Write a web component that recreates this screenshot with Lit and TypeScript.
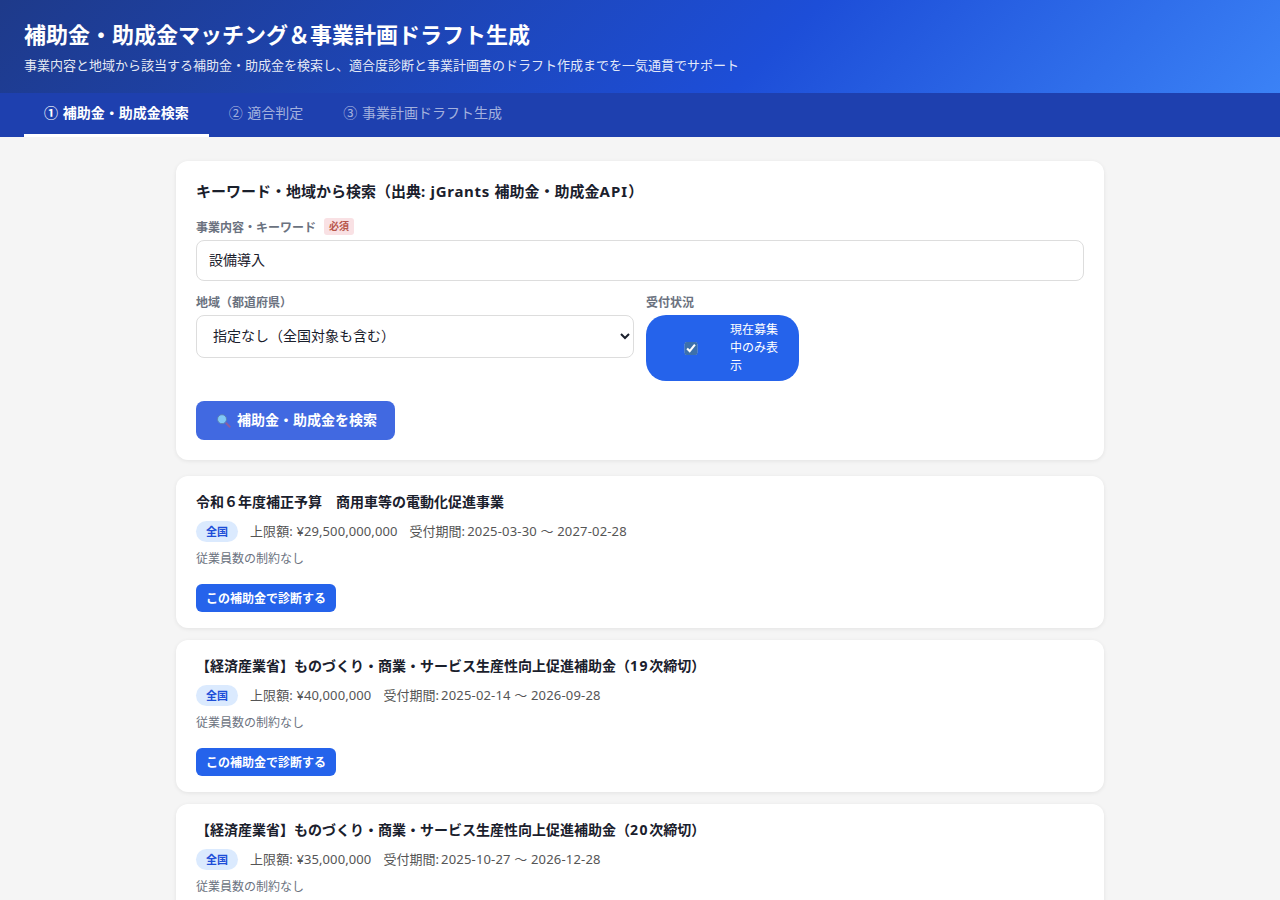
import { LitElement, html, css } from "lit";
import { customElement } from "lit/decorators.js";

const AMP = "\uFF06";
const LP = "\uFF08";
const RP = "\uFF09";
const items = [
  { title: "令和\uFF16年度補正予算\u3000商用車等の電動化促進事業", round: "", amount: "¥29,500,000,000", period: "2025-03-30 〜 2027-02-28" },
  { title: "【経済産業省】ものづくり・商業・サービス生産性向上促進補助金", round: "19", amount: "¥40,000,000", period: "2025-02-14 〜 2026-09-28" },
  { title: "【経済産業省】ものづくり・商業・サービス生産性向上促進補助金", round: "20", amount: "¥35,000,000", period: "2025-10-27 〜 2026-12-28" },
];

@customElement("app-root")
export class AppRoot extends LitElement {
  static styles = css`
    :host {
      display: block;
      min-height: 900px;
      background: #f5f5f5;
      color: #1a202c;
      font-family: "Noto Sans", "Noto Sans CJK JP", sans-serif;
    }
    * { box-sizing: border-box; }
    .header {
      height: 93px;
      padding: 19px 24px 0;
      color: #fff;
      background: linear-gradient(135deg, #1e3a8a 0%, #1d4ed8 60%, #3b82f6 100%);
    }
    h1 { margin: 0; font-size: 22px; line-height: 30px; font-weight: 700; }
    .sub { margin: 6px 0 0; font-size: 13px; line-height: 20px; color: rgba(255, 255, 255, 0.9); }
    .tabs { display: flex; height: 44px; padding: 0 24px; background: #1e40af; }
    .tab {
      padding: 0 20px;
      font-size: 14px;
      line-height: 39px;
      word-spacing: 1px;
      color: rgba(255, 255, 255, 0.6);
      border-bottom: 3px solid transparent;
    }
    .tab.on { color: #fff; font-weight: 700; border-bottom-color: #fff; }
    .main { width: 928px; margin: 0 auto; padding-top: 24px; display: flex; flex-direction: column; gap: 12px; }
    .card { background: #fff; border-radius: 12px; padding: 20px; box-shadow: 0 1px 4px rgba(0, 0, 0, 0.08); }
    .search { margin-bottom: 4px; }
    h2 { margin: 0 0 16px; font-size: 15px; line-height: 21px; font-weight: 700; color: #1a202c; }
    h2 .src { letter-spacing: 0.7px; }
    h2 .api { letter-spacing: 1px; }
    .label { display: flex; align-items: center; height: 18px; margin-bottom: 4px; padding-bottom: 1px; font-size: 12px; font-weight: 700; color: #6b7280; }
    .req {
      margin-left: 8px;
      padding: 0 5px;
      font-size: 10px;
      line-height: 17px;
      border-radius: 3px;
      background: #f9e1e4;
      color: #b8574c;
    }
    .input {
      width: 100%;
      height: 41px;
      padding: 0 12px 4px;
      border: 1px solid #ddd;
      border-radius: 8px;
      font: inherit;
      font-size: 14px;
      color: #1a202c;
      background: #fff;
      outline: none;
    }
    .row { display: grid; grid-template-columns: 1fr 1fr; gap: 12px; margin-top: 12px; }
    select.input { height: 43px; padding: 0 12px 2px; }
    .pill {
      display: inline-flex;
      align-items: center;
      gap: 14px;
      width: 153px;
      height: 66px;
      padding: 6px 20px;
      border-radius: 20px;
      background: #2563eb;
      color: #fff;
      font-size: 12px;
      line-height: 18px;
    }
    .pill input { flex: none; width: 50px; height: 13px; margin: 0; accent-color: #3d70ab; }
    .pill span { width: 49px; flex: none; }
    .go {
      display: inline-flex;
      align-items: center;
      gap: 6px;
      height: 39px;
      margin-top: 20px;
      padding: 0 18px 0 21px;
      border: 0;
      border-radius: 8px;
      background: #4169e1;
      color: #fff;
      font: inherit;
      font-size: 14px;
      font-weight: 700;
    }
    .go span { position: relative; top: -2px; }
    .go svg { width: 14px; height: 14px; flex: none; }
    .item { padding: 16px 20px; }
    h3 { margin: 0; font-size: 14px; line-height: 20px; font-weight: 700; color: #1a202c; }
    h3 .num { letter-spacing: 1.6px; }
    .meta { display: flex; align-items: center; gap: 12px; margin-top: 9px; font-size: 13px; line-height: 21px; letter-spacing: 0.1px; color: #555; }
    .tag { padding: 0 10px; border-radius: 11px; background: #dbeafe; color: #1d4ed8; font-size: 11px; font-weight: 700; line-height: 21px; letter-spacing: 0; }
    .period { letter-spacing: 0; word-spacing: -1.2px; }
    .dates { letter-spacing: 0.18px; word-spacing: 0; }
    .note { margin-top: 8px; font-size: 12px; line-height: 18px; color: #6b7280; }
    .use {
      display: block;
      height: 28px;
      margin-top: 16px;
      padding: 0 10px;
      border: 0;
      border-radius: 6px;
      background: #2563eb;
      color: #fff;
      font: inherit;
      font-size: 12px;
      font-weight: 700;
    }
  `;

  render() {
    return html`
      <header class="header">
        <h1>補助金・助成金マッチング${AMP}事業計画ドラフト生成</h1>
        <p class="sub">事業内容と地域から該当する補助金・助成金を検索し、適合度診断と事業計画書のドラフト作成までを一気通貫でサポート</p>
      </header>
      <nav class="tabs">
        <div class="tab on">① 補助金・助成金検索</div>
        <div class="tab">② 適合判定</div>
        <div class="tab">③ 事業計画ドラフト生成</div>
      </nav>
      <main class="main">
        <section class="card search">
          <h2>キーワード・地域から検索${LP}出典<span class="src">: jGrants </span>補助金・助成金<span class="api">API</span>${RP}</h2>
          <div class="label">事業内容・キーワード<span class="req">必須</span></div>
          <input class="input" .value=${"設備導入"} />
          <div class="row">
            <div>
              <div class="label">地域${LP}都道府県${RP}</div>
              <select class="input"><option>指定なし${LP}全国対象も含む${RP}</option></select>
            </div>
            <div>
              <div class="label">受付状況</div>
              <label class="pill"><input type="checkbox" checked /><span>現在募集中のみ表示</span></label>
            </div>
          </div>
          <button class="go">
            <svg viewBox="0 0 14 14" aria-hidden="true">
              <path d="M8 9.6l1.6-1.6 4.1 4.2c.5.6-.9 2-1.5 1.5z" fill="#8a5fa0" />
              <circle cx="5" cy="5.2" r="4.5" fill="#80c8f8" stroke="#5a7fb0" stroke-width="0.9" />
            </svg>
            <span>補助金・助成金を検索</span>
          </button>
        </section>
        ${items.map(
          (it) => html`
            <article class="card item">
              <h3>${it.title}${it.round
                ? html`${LP}<span class="num">${it.round}</span>次締切${RP}`
                : ""}</h3>
              <div class="meta">
                <span class="tag">全国</span>
                <span>上限額: ${it.amount}</span>
                <span class="period">受付期間: <span class="dates">${it.period}</span></span>
              </div>
              <div class="note">従業員数の制約なし</div>
              <button class="use">この補助金で診断する</button>
            </article>
          `
        )}
      </main>
    `;
  }
}
